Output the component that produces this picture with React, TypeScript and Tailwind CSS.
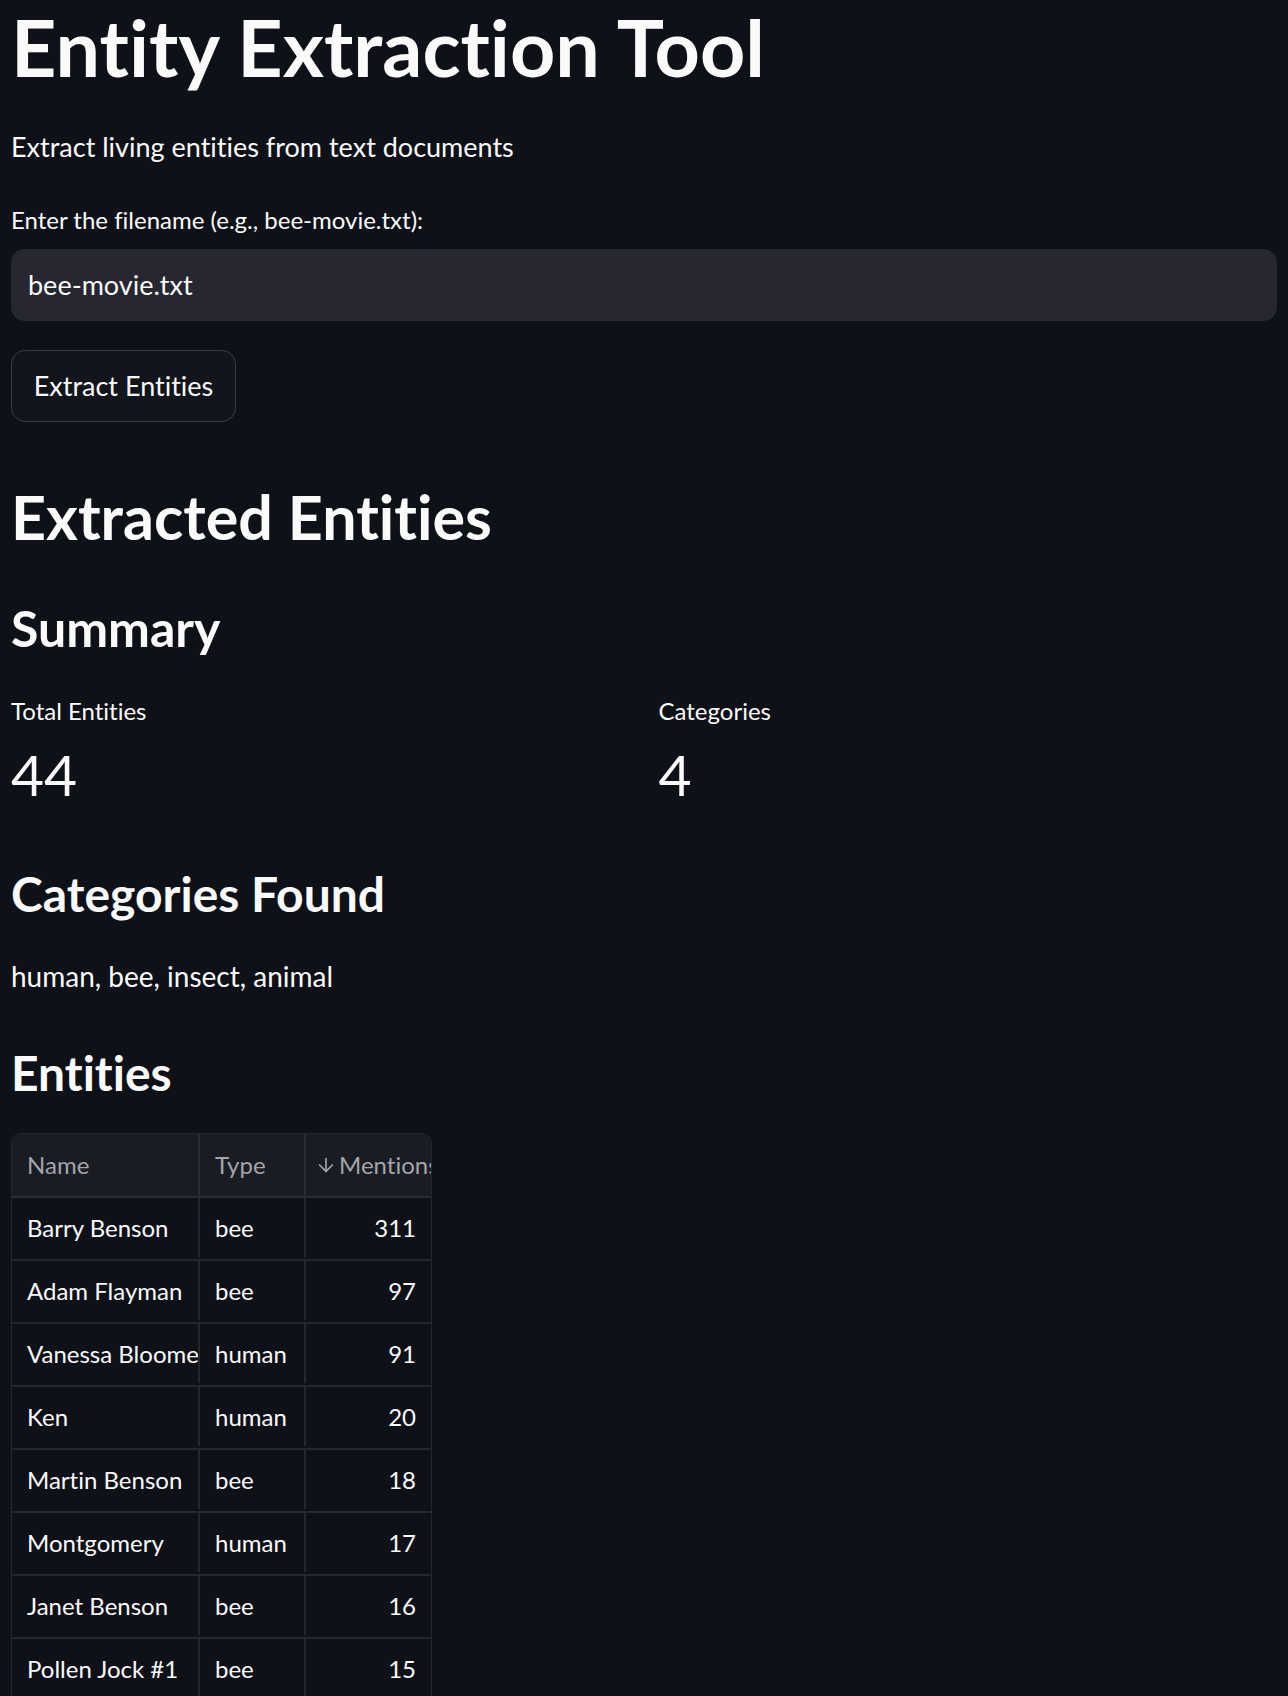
import { ArrowDown } from 'lucide-react'

const FONT = { fontFamily: '"Source Sans Pro", Lato, "Noto Sans", sans-serif', fontVariantLigatures: 'none' as const }

const ROWS: [string, string, number][] = [
  ['Barry Benson', 'bee', 311],
  ['Adam Flayman', 'bee', 97],
  ['Vanessa Bloome', 'human', 91],
  ['Ken', 'human', 20],
  ['Martin Benson', 'bee', 18],
  ['Montgomery', 'human', 17],
  ['Janet Benson', 'bee', 16],
  ['Pollen Jock #1', 'bee', 15],
]

function Metric({ label, value }: { label: string; value: string }) {
  return (
    <div className="flex-1">
      <div className="mt-[39px] text-[24px] leading-[30px]">{label}</div>
      <div className="mt-[13px] text-[57px] leading-[70px]">{value}</div>
    </div>
  )
}

function EntityTable() {
  return (
    <div className="mt-[31px] w-[421px] overflow-hidden rounded-t-[10px] border border-b-0 border-[#25272e] text-[24px]">
      {/* Header */}
      <div className="grid h-[64px] grid-cols-[188px_106px_127px] border-b-2 border-[#2b2d34] bg-[#1a1c23] text-[#a3a5aa]">
        <div className="flex items-center border-r-2 border-[#2b2d34] pl-[15px]">Name</div>
        <div className="flex items-center border-r-2 border-[#2b2d34] pl-[15px]">Type</div>
        <div className="flex items-center gap-[2px] whitespace-nowrap pl-[9px]">
          <ArrowDown className="h-[22px] w-[22px] shrink-0" strokeWidth={1.8} />
          <span className="shrink-0">Mentions</span>
        </div>
      </div>

      {/* Rows */}
      {ROWS.map(([name, type, count]) => (
        <div
          key={name}
          className="grid h-[63px] grid-cols-[188px_106px_127px] border-b-2 border-[#25272e] bg-[#0e1117] pb-[2px]"
        >
          <div className="flex items-center overflow-hidden whitespace-nowrap border-r-2 border-[#25272e] pl-[15px]">
            {name}
          </div>
          <div className="flex items-center border-r-2 border-[#25272e] pl-[15px]">{type}</div>
          <div className="flex items-center justify-end pr-[17px]">{count}</div>
        </div>
      ))}
    </div>
  )
}

export default function App() {
  return (
    <div className="h-[1696px] overflow-hidden bg-[#0e1117] text-[#fafafa]" style={FONT}>
      <div className="flex flex-col px-[11px]">
        <h1 className="text-[79px] font-bold leading-[94px]">Entity Extraction Tool</h1>
        <p className="mt-[33px] text-[27px] leading-[40px]">Extract living entities from text documents</p>

        <label className="mt-[37px] text-[24px] leading-[32px]">Enter the filename (e.g., bee-movie.txt):</label>
        <div className="mt-[13px] flex h-[72px] items-center rounded-[14px] bg-[#262730] px-[17px] text-[27px]">
          bee-movie.txt
        </div>

        <button className="mt-[29px] flex h-[72px] w-[225px] items-center justify-center rounded-[14px] border border-[#3b3d44] bg-[#12151b] text-[27px]">
          Extract Entities
        </button>

        <h2 className="mt-[59px] text-[61px] font-bold leading-[72px]">Extracted Entities</h2>

        <h3 className="mt-[46px] text-[50px] font-bold leading-[58px]">Summary</h3>
        <div className="flex gap-[29px]">
          <Metric label="Total Entities" value="44" />
          <Metric label="Categories" value="4" />
        </div>

        <h3 className="mt-[56px] text-[48px] font-bold leading-[58px]">Categories Found</h3>
        <p className="mt-[33px] text-[28px] leading-[40px]">human, bee, insect, animal</p>

        <h3 className="mt-[48px] text-[48px] font-bold leading-[58px]">Entities</h3>
        <EntityTable />
      </div>
    </div>
  )
}
